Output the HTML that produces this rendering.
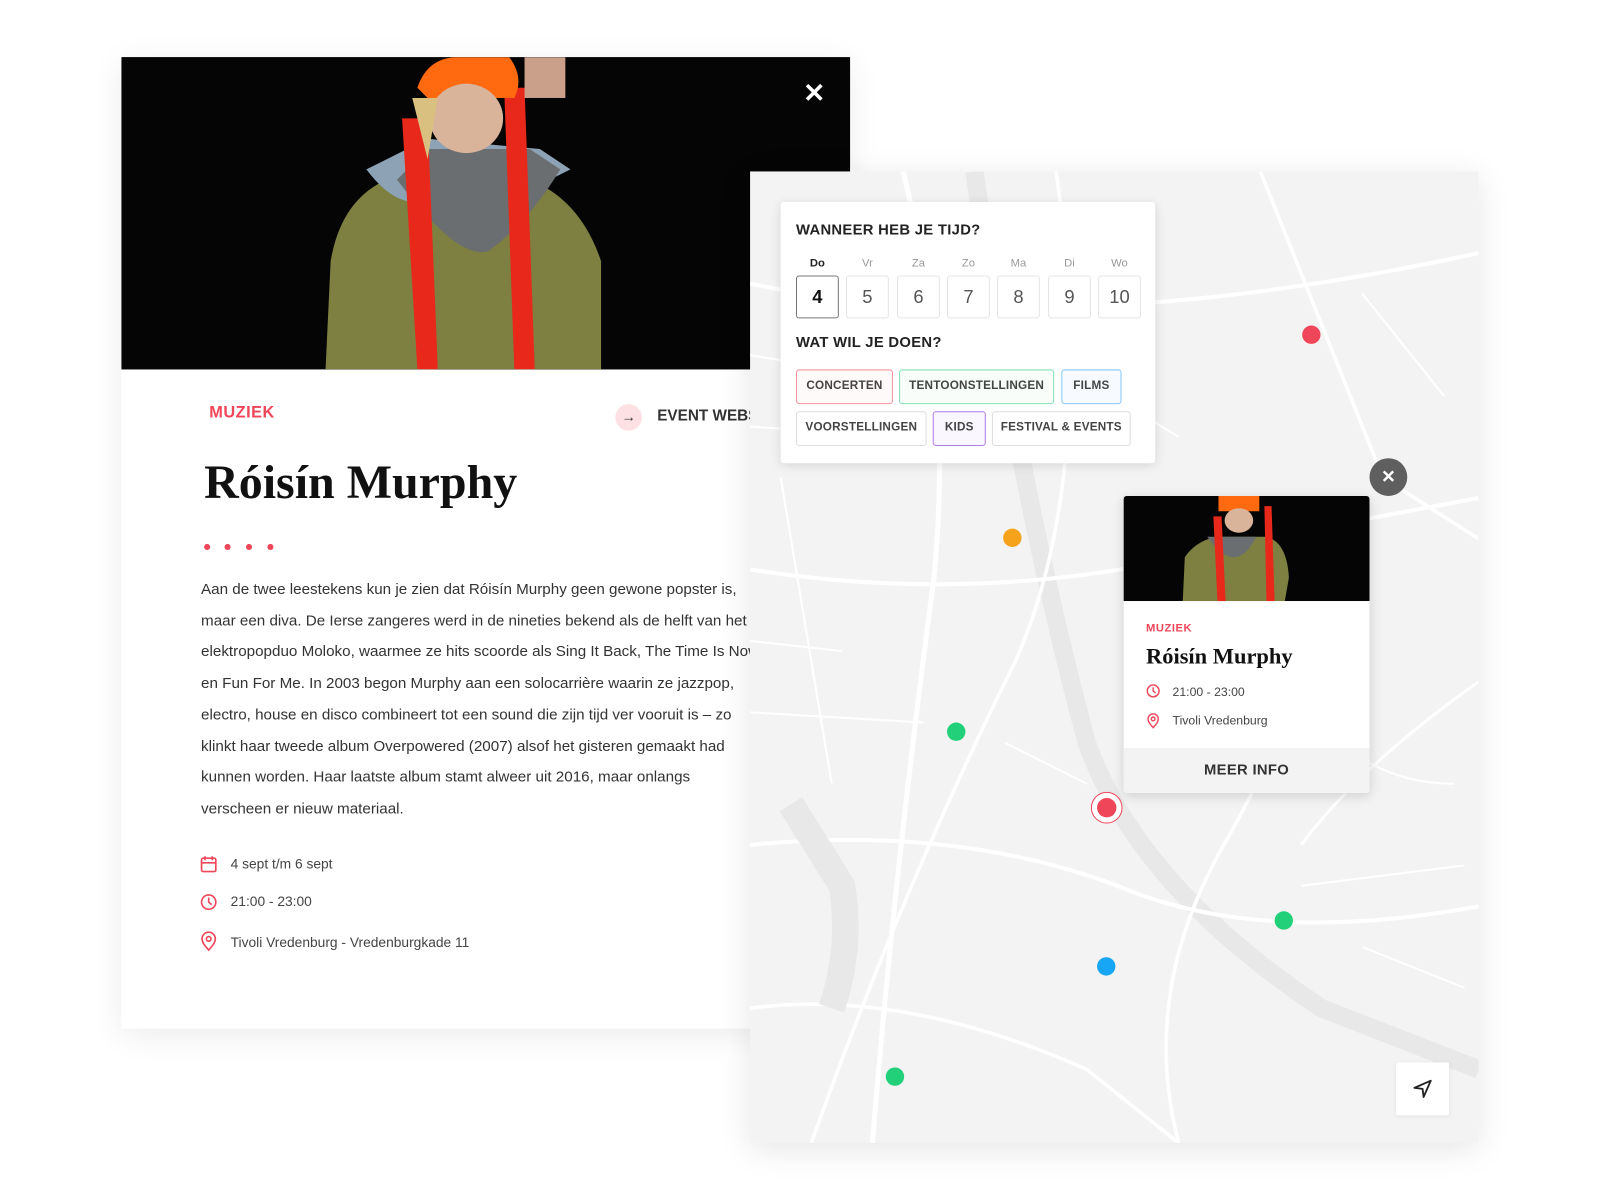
<!DOCTYPE html>
<html><head><meta charset="utf-8"><style>
*{margin:0;padding:0;box-sizing:border-box}
body{width:1600px;height:1200px;background:#fff;position:relative;overflow:hidden;font-family:"Liberation Sans",sans-serif;color:#333}
#w{position:absolute;left:0;top:0;width:1570px;height:1177px;transform:scale(1.0205);transform-origin:0 0}
.card{position:absolute;left:119px;top:56px;width:714px;height:952px;background:#fff;box-shadow:0 6px 30px rgba(0,0,0,.08)}
.photo{position:absolute;left:0;top:0;width:714px;height:306px;background:#040404;overflow:hidden}
.x{position:absolute;color:#fff;font-size:26px;font-weight:bold}
.cat{position:absolute;color:#f0465a;font-weight:bold;letter-spacing:.5px}
.map{position:absolute;left:735px;top:168px;width:714px;height:952px;background:#f3f3f3;overflow:hidden;box-shadow:0 6px 30px rgba(0,0,0,.1)}
.panel{position:absolute;left:765px;top:198px;width:367px;height:256px;background:#fff;border-radius:3px;box-shadow:0 2px 10px rgba(0,0,0,.12)}
.h{position:absolute;font-size:14.5px;font-weight:bold;color:#222;letter-spacing:.3px}
.day{position:absolute;top:54px;font-size:11px;color:#999;width:42px;text-align:center}
.num{position:absolute;top:72px;width:42px;height:42px;border:1px solid #e4e4e4;border-radius:3px;font-size:18px;color:#555;text-align:center;line-height:40px}
.tag{position:absolute;height:34px;border:1.5px solid #ddd;border-radius:3px;font-size:11.5px;font-weight:bold;color:#444;line-height:31px;text-align:center;letter-spacing:.2px;white-space:nowrap}
.dot{position:absolute;width:18px;height:18px;border-radius:50%}
.txt{position:absolute;left:197px;top:563px;width:538px;font-size:14.9px;line-height:30.7px;color:#333;white-space:nowrap;overflow:hidden}
.info{position:absolute;left:226px;font-size:13.5px;color:#444}
</style></head><body><div id="w">
<div class="card">
 <div class="photo">
  <svg width="714" height="306" viewBox="0 0 714 306">
   <rect width="714" height="306" fill="#050505"/>
   <path d="M200 306 L205 200 Q215 140 260 120 L330 100 L400 120 Q450 140 470 200 L470 306Z" fill="#7d8040"/>
   <path d="M240 110 Q270 150 300 140 L340 110 L380 140 Q420 120 440 110 L410 90 L300 80Z" fill="#8ea2b5"/>
   <path d="M270 120 Q330 200 360 190 Q400 160 430 110 L400 90 L300 90Z" fill="#6b6e70"/>
   <path d="M275 60 L290 306 L310 306 L300 60Z" fill="#e8281a"/>
   <path d="M375 30 L385 306 L405 306 L395 30Z" fill="#e8281a"/>
   <path d="M290 30 Q300 0 330 0 L380 0 Q395 20 385 40 L300 40Z" fill="#ff6a10"/>
   <ellipse cx="338" cy="60" rx="36" ry="34" fill="#d9b39a"/>
   <path d="M285 40 L300 100 L310 40Z" fill="#d9c080"/>
   <rect x="395" y="0" width="40" height="40" fill="#caa08a"/>
  </svg>
  <div class="x" style="left:668px;top:20px">✕</div>
 </div>
 <div class="cat" style="left:86px;top:340px;font-size:16px">MUZIEK</div>
 <div style="position:absolute;left:484px;top:340px;width:26px;height:26px;border-radius:50%;background:#fde0e3;text-align:center;line-height:25px;font-size:14px;color:#333">→</div>
 <div style="position:absolute;left:525px;top:343px;font-size:15px;font-weight:bold;color:#333;white-space:nowrap">EVENT WEBSITE</div>
 <div style="position:absolute;left:81px;top:390px;font-family:'Liberation Serif',serif;font-weight:bold;font-size:47px;color:#111">Róisín Murphy</div>
 <div style="position:absolute;left:81px;top:477px">
  <span style="position:absolute;left:0;width:6px;height:6px;border-radius:50%;background:#f0465a"></span>
  <span style="position:absolute;left:20px;width:6px;height:6px;border-radius:50%;background:#f0465a"></span>
  <span style="position:absolute;left:41px;width:6px;height:6px;border-radius:50%;background:#f0465a"></span>
  <span style="position:absolute;left:62px;width:6px;height:6px;border-radius:50%;background:#f0465a"></span>
 </div>
</div>
<div class="txt">Aan de twee leestekens kun je zien dat Róisín Murphy geen gewone popster is,<br>maar een diva. De Ierse zangeres werd in de nineties bekend als de helft van het<br>elektropopduo Moloko, waarmee ze hits scoorde als Sing It Back, The Time Is Now<br>en Fun For Me. In 2003 begon Murphy aan een solocarrière waarin ze jazzpop,<br>electro, house en disco combineert tot een sound die zijn tijd ver vooruit is – zo<br>klinkt haar tweede album Overpowered (2007) alsof het gisteren gemaakt had<br>kunnen worden. Haar laatste album stamt alweer uit 2016, maar onlangs<br>verscheen er nieuw materiaal.</div>
<svg style="position:absolute;left:196px;top:838px" width="18" height="100" fill="none" stroke="#f0465a" stroke-width="1.6">
 <rect x="1.5" y="3" width="14" height="13" rx="1.5"/><path d="M1.5 7.5h14M5 1v4M12 1v4"/>
 <circle cx="8.5" cy="46" r="7"/><path d="M8.5 41.5v4.5l3 2.5"/>
 <path d="M8.5 93c-4-4.5-6.5-7.5-6.5-11a6.5 6.5 0 0 1 13 0c0 3.5-2.5 6.5-6.5 11z"/><circle cx="8.5" cy="82" r="2.3"/>
</svg>
<div class="info" style="top:839px">4 sept t/m 6 sept</div>
<div class="info" style="top:876px">21:00 - 23:00</div>
<div class="info" style="top:916px">Tivoli Vredenburg - Vredenburgkade 11</div>

<div class="map">
 <svg width="714" height="952" viewBox="0 0 714 952" fill="none" stroke="#fff">
  <path d="M220 0 Q260 300 330 560 Q380 700 560 820 L714 880" stroke="#e8e8e8" stroke-width="18"/>
  <path d="M150 0 Q200 200 180 400 Q140 700 120 952" stroke-width="5"/>
  <path d="M0 110 Q300 170 714 80" stroke-width="4"/>
  <path d="M0 390 Q250 430 500 360 L714 320" stroke-width="4"/>
  <path d="M0 660 Q200 640 360 700 Q500 760 714 720" stroke-width="4"/>
  <path d="M60 952 Q150 700 260 480 Q340 300 300 0" stroke-width="3.5"/>
  <path d="M500 0 Q560 150 620 300 L714 360" stroke-width="3.5"/>
  <path d="M420 952 Q380 800 470 650 Q530 540 560 460" stroke-width="3.5"/>
  <path d="M0 820 Q150 800 330 880 L420 952" stroke-width="3.5"/>
  <path d="M540 660 Q600 580 714 500" stroke-width="3"/>
  <path d="M0 250 L150 260 M0 530 L170 540 M30 300 L80 600 M600 120 L680 220 M540 520 Q600 600 690 600 M0 180 L120 200 M320 200 L420 260 M0 460 L90 470 M250 560 L330 600 M540 700 L700 680 M600 760 L700 800" stroke-width="2"/>
  <path d="M80 820 Q100 760 90 700 L40 620" stroke="#e8e8e8" stroke-width="26"/>
 </svg>
</div>
<div class="panel">
 <div class="h" style="left:15px;top:20px">WANNEER HEB JE TIJD?</div>
 <div class="day" style="left:15px;color:#222;font-weight:bold">Do</div><div class="day" style="left:64px">Vr</div><div class="day" style="left:114px">Za</div><div class="day" style="left:163px">Zo</div><div class="day" style="left:212px">Ma</div><div class="day" style="left:262px">Di</div><div class="day" style="left:311px">Wo</div>
 <div class="num" style="left:15px;border:1.5px solid #777;color:#111;font-weight:bold">4</div><div class="num" style="left:64px">5</div><div class="num" style="left:114px">6</div><div class="num" style="left:163px">7</div><div class="num" style="left:212px">8</div><div class="num" style="left:262px">9</div><div class="num" style="left:311px">10</div>
 <div class="h" style="left:15px;top:130px">WAT WIL JE DOEN?</div>
 <div class="tag" style="left:15px;top:164px;width:95px;border-color:#f5949e;background:#fffafa">CONCERTEN</div>
 <div class="tag" style="left:116px;top:164px;width:152px;border-color:#86e0b4;background:#f8fdfa">TENTOONSTELLINGEN</div>
 <div class="tag" style="left:275px;top:164px;width:59px;border-color:#86c8f5;background:#f7fbff">FILMS</div>
 <div class="tag" style="left:15px;top:205px;width:128px">VOORSTELLINGEN</div>
 <div class="tag" style="left:149px;top:205px;width:52px;border-color:#b07ae8;background:#faf7ff">KIDS</div>
 <div class="tag" style="left:207px;top:205px;width:136px">FESTIVAL &amp; EVENTS</div>
</div>
<div class="dot" style="left:1276px;top:319px;background:#f0465a"></div>
<div class="dot" style="left:983px;top:518px;background:#f7a21b"></div>
<div class="dot" style="left:928px;top:708px;background:#22d07a"></div>
<div class="dot" style="left:1249px;top:893px;background:#22d07a"></div>
<div class="dot" style="left:1075px;top:938px;background:#16a6f5"></div>
<div class="dot" style="left:868px;top:1046px;background:#22d07a"></div>
<div style="position:absolute;left:1069px;top:776px;width:31px;height:31px;border-radius:50%;border:1.5px solid #f0465a;background:#fff"></div>
<div class="dot" style="left:1075px;top:782px;width:19px;height:19px;background:#f0465a"></div>
<div style="position:absolute;left:1342px;top:449px;width:37px;height:37px;border-radius:50%;background:#5f5f5f;color:#fff;text-align:center;line-height:37px;font-size:17px;font-weight:bold">✕</div>
<div style="position:absolute;left:1101px;top:486px;width:241px;height:291px;background:#fff;border-radius:3px;box-shadow:0 3px 12px rgba(0,0,0,.15);overflow:hidden">
 <svg width="241" height="103" viewBox="0 0 241 103">
  <rect width="241" height="103" fill="#050505"/>
  <path d="M58 103 L60 60 Q70 45 90 40 L140 40 Q160 45 162 80 L158 103Z" fill="#7d8040"/>
  <path d="M82 40 Q110 80 130 40Z" fill="#6b6e70"/>
  <path d="M88 20 L92 103 L100 103 L96 20Z" fill="#e8281a"/>
  <path d="M138 10 L140 103 L148 103 L145 10Z" fill="#e8281a"/>
  <path d="M93 0 L133 0 L133 15 L93 15Z" fill="#ff6a10"/>
  <ellipse cx="113" cy="24" rx="14" ry="12" fill="#d9b39a"/>
 </svg>
 <div class="cat" style="left:22px;top:124px;font-size:11px">MUZIEK</div>
 <div style="position:absolute;left:22px;top:144px;font-family:'Liberation Serif',serif;font-weight:bold;font-size:22px;color:#111">Róisín Murphy</div>
 <svg style="position:absolute;left:22px;top:184px" width="14" height="46" fill="none" stroke="#f0465a" stroke-width="1.4">
  <circle cx="7" cy="7" r="5.8"/><path d="M7 3.5v3.5l2.3 2"/>
  <path d="M7 43c-3-3.5-5-5.5-5-8.5a5 5 0 0 1 10 0c0 3-2 5-5 8.5z"/><circle cx="7" cy="34.5" r="1.8"/>
 </svg>
 <div style="position:absolute;left:48px;top:185px;font-size:12px;color:#444">21:00 - 23:00</div>
 <div style="position:absolute;left:48px;top:213px;font-size:12px;color:#444">Tivoli Vredenburg</div>
 <div style="position:absolute;left:0;top:247px;width:241px;height:44px;background:#f3f3f3;text-align:center;line-height:44px;font-size:14.5px;font-weight:bold;color:#333;letter-spacing:.3px">MEER INFO</div>
</div>
<div style="position:absolute;left:1368px;top:1041px;width:52px;height:52px;background:#fff;border-radius:2px;box-shadow:0 1px 4px rgba(0,0,0,.08)">
 <svg style="position:absolute;left:16px;top:16px" width="20" height="20" viewBox="0 0 20 20" fill="none" stroke="#222" stroke-width="1.8" stroke-linejoin="round"><path d="M18 2 L2 9 L10 10 L11 18 Z"/></svg>
</div>
</div></body></html>
